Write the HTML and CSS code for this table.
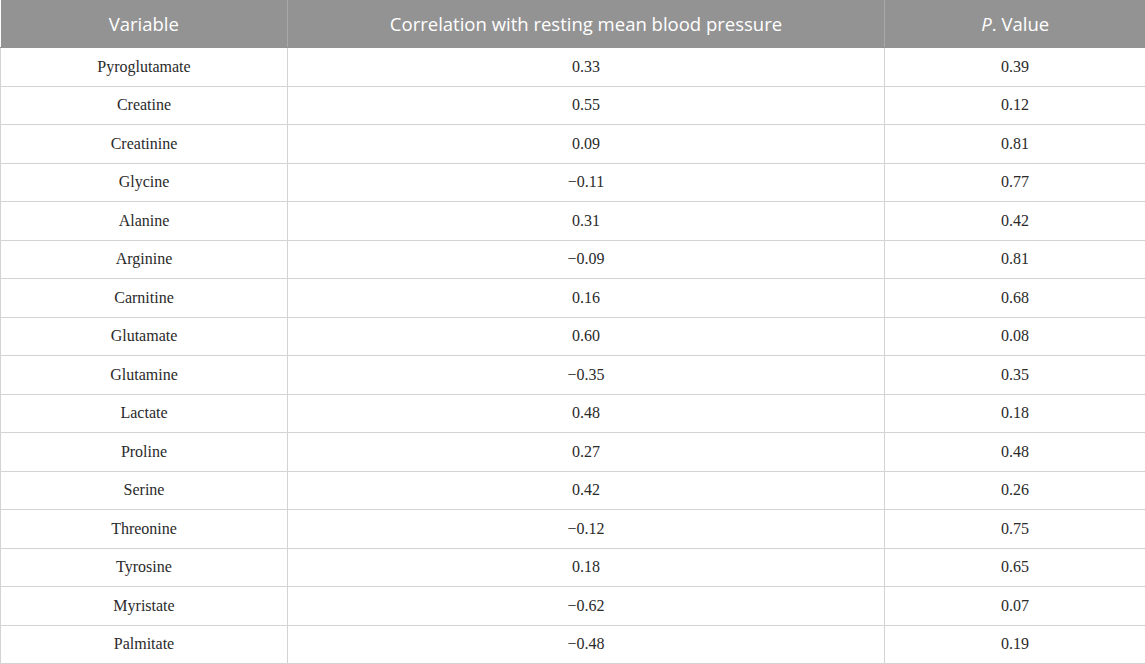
FILE: index.html
```html
<!DOCTYPE html>
<html>
<head>
<meta charset="utf-8">
<link rel="stylesheet" href="styles.css">
</head>
<body>
<table class="data">
  <colgroup>
    <col class="c1"><col class="c2"><col class="c3">
  </colgroup>
  <thead>
    <tr><th>Variable</th><th>Correlation with resting mean blood pressure</th><th><i>P</i>. Value</th></tr>
  </thead>
  <tbody>
    <tr><td>Pyroglutamate</td><td>0.33</td><td>0.39</td></tr>
    <tr><td>Creatine</td><td>0.55</td><td>0.12</td></tr>
    <tr><td>Creatinine</td><td>0.09</td><td>0.81</td></tr>
    <tr><td>Glycine</td><td>−0.11</td><td>0.77</td></tr>
    <tr><td>Alanine</td><td>0.31</td><td>0.42</td></tr>
    <tr><td>Arginine</td><td>−0.09</td><td>0.81</td></tr>
    <tr><td>Carnitine</td><td>0.16</td><td>0.68</td></tr>
    <tr><td>Glutamate</td><td>0.60</td><td>0.08</td></tr>
    <tr><td>Glutamine</td><td>−0.35</td><td>0.35</td></tr>
    <tr><td>Lactate</td><td>0.48</td><td>0.18</td></tr>
    <tr><td>Proline</td><td>0.27</td><td>0.48</td></tr>
    <tr><td>Serine</td><td>0.42</td><td>0.26</td></tr>
    <tr><td>Threonine</td><td>−0.12</td><td>0.75</td></tr>
    <tr><td>Tyrosine</td><td>0.18</td><td>0.65</td></tr>
    <tr><td>Myristate</td><td>−0.62</td><td>0.07</td></tr>
    <tr><td>Palmitate</td><td>−0.48</td><td>0.19</td></tr>
  </tbody>
</table>
</body>
</html>
```

FILE: styles.css
```css
html, body {
  margin: 0;
  padding: 0;
  background: #ffffff;
}
.data {
  width: 1145px;
  border-collapse: collapse;
  table-layout: fixed;
}
.c1 { width: 287px; }
.c2 { width: 597px; }
.c3 { width: 261px; }
.data th {
  height: 47px;
  padding: 0;
  background: #939393;
  color: #ffffff;
  font-family: "Open Sans", "Noto Sans", sans-serif;
  font-weight: 400;
  font-size: 18.5px;
  text-align: center;
  vertical-align: middle;
  border-left: 1px solid #a8a8a8;
  border-bottom: 1px solid #939393;
}
.data th:first-child { border-left: none; }
.data td {
  height: 37.5px;
  padding: 0;
  color: #2a2a2a;
  font-family: "Liberation Serif", "Times New Roman", serif;
  font-size: 16px;
  text-align: center;
  vertical-align: middle;
  border: 1px solid #d3d3d3;
}
.data tbody tr:first-child td { border-top: none; }
```
